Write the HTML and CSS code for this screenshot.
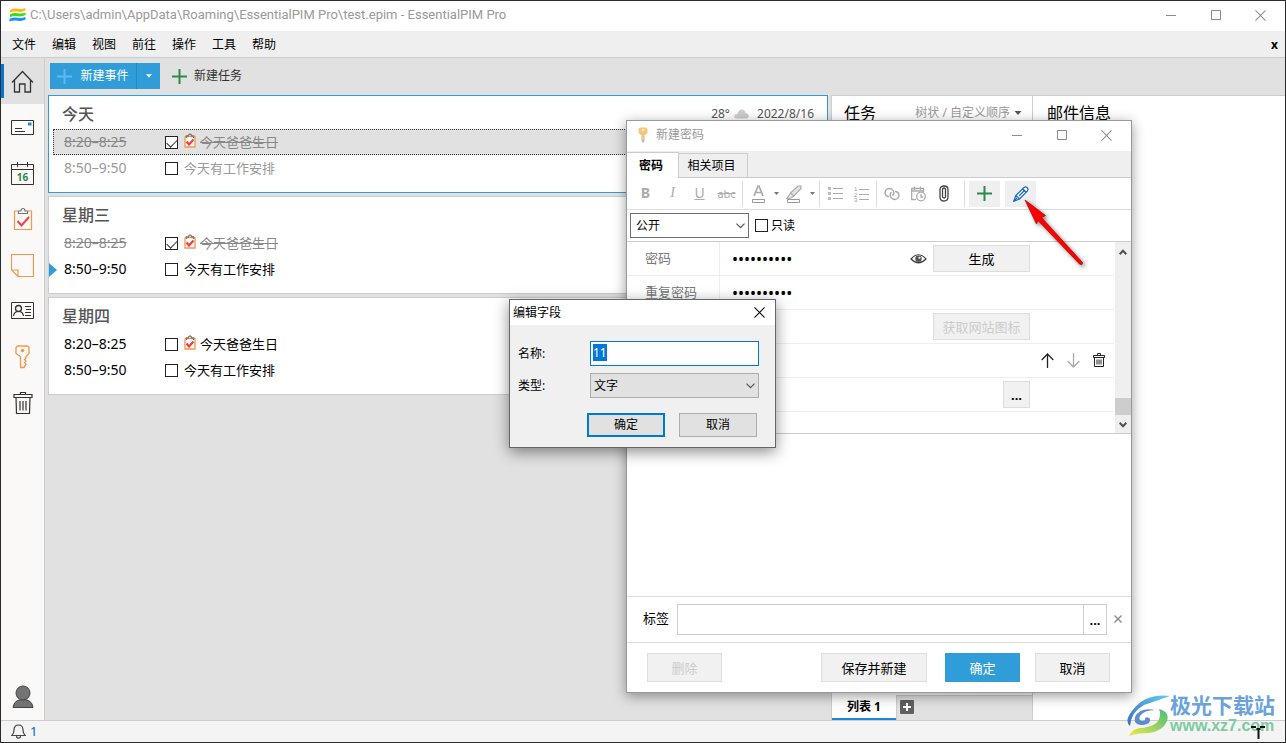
FILE: index.html
```html
<!DOCTYPE html>
<html lang="zh-CN">
<head>
<meta charset="utf-8">
<title>EssentialPIM Pro</title>
<link rel="stylesheet" href="styles.css">
</head>
<body>
<svg class="defs" aria-hidden="true">
  <symbol id="clip-check" viewBox="0 0 20 24">
    <path d="M5 4H1.500V22.500H18.500V4H15" fill="none" stroke="#f79646" stroke-width="1.200"/>
    <path d="M5.500 6.500V4H8Q8 1.500 10 1.500T12 4H14.500V6.500Z" fill="#fff" stroke="#777" stroke-width="1.200"/>
    <path d="M4.500 14L8.500 18.500L16 10" fill="none" stroke="#ee4048" stroke-width="2"/>
  </symbol>
  <symbol id="clip-small" viewBox="0 0 12 15">
    <path d="M1 3.500V14H11V3.500H1" fill="#fff" stroke="#f79646" stroke-width="1.300"/>
    <path d="M2.500 5V3H4.300Q4.500 1 6 1T7.700 3H9.500V5" fill="none" stroke="#777" stroke-width="1.300"/>
    <path d="M2.500 8.500L5 11.500L9.500 6.500" fill="none" stroke="#ee4048" stroke-width="2.200"/>
  </symbol>
  <symbol id="trash" viewBox="0 0 20 24">
    <path d="M1 3.500H19V6.500H1ZM7.500 3.500V1.500H12.500V3.500M3 6.500L3.500 22.500H16.500L17 6.500M7 10V19.500M10 10V19.500M13 10V19.500" fill="none" stroke="#333" stroke-width="1.200"/>
  </symbol>
  <symbol id="caret" viewBox="0 0 7 4"><path d="M0 0H7L3.500 4Z" fill="currentColor"/></symbol>
  <symbol id="chevron" viewBox="0 0 9 6"><path d="M.5 .7L4.500 4.700L8.500 .7" fill="none" stroke="#555" stroke-width="1.200"/></symbol>
  <symbol id="chevron-bold" viewBox="0 0 8 6"><path d="M.7 .8L4 4.200L7.300 .8" fill="none" stroke="#505050" stroke-width="2"/></symbol>
  <symbol id="plus" viewBox="0 0 15 15"><path d="M7.500 0V15M0 7.500H15" fill="none" stroke="currentColor" stroke-width="2"/></symbol>
  <symbol id="close" viewBox="0 0 12 12"><path d="M.5 .5L11.500 11.500M11.500 .5L.5 11.500" fill="none" stroke="currentColor" stroke-width="1.100"/></symbol>
  <symbol id="min" viewBox="0 0 12 12"><path d="M1 6.500H11" stroke="currentColor"/></symbol>
  <symbol id="max" viewBox="0 0 12 12"><path d="M1.500 1.500H10.500V10.500H1.500Z" fill="none" stroke="currentColor"/></symbol>
</svg>

<div class="app">
  <header class="titlebar">
    <svg class="logo" width="17" height="14" viewBox="0 0 17 14"><path d="M1 2Q5 0 9 .8T16.500 0V2.500Q13 4.500 9 3.700T1 4.500Z" fill="#ffb81c"/><path d="M1 6.300Q5 4.500 9 5.300T16.500 4.500V7Q13 9 9 8.200T1 9Z" fill="#3fdc1b"/><path d="M.5 10.800Q5 9 9 9.800T16.500 9V11.500Q13 13.500 9 12.700T.5 13.500Z" fill="#1296f5"/></svg>
    <span class="path">C:\Users\admin\AppData\Roaming\EssentialPIM Pro\test.epim - EssentialPIM Pro</span>
    <div class="winctl">
      <button aria-label="最小化"><svg width="12" height="12"><use href="#min"/></svg></button>
      <button aria-label="最大化"><svg width="12" height="12"><use href="#max"/></svg></button>
      <button aria-label="关闭"><svg width="11" height="11"><use href="#close"/></svg></button>
    </div>
  </header>

  <nav class="menubar">
    <button>文件</button><button>编辑</button><button>视图</button><button>前往</button><button>操作</button><button>工具</button><button>帮助</button>
    <button class="menubar-x">x</button>
  </nav>

  <div class="body">
    <aside class="sidebar">
      <button class="side active" aria-label="今天"><svg width="23" height="23" viewBox="0 0 23 23"><path d="M1 12.500L11.500 1.500L22 12.500M3.500 10V22H8.500V14H14V22H19.500V10" fill="none" stroke="#333" stroke-width="1.300"/></svg></button>
      <button class="side" aria-label="邮件"><svg width="23" height="15" viewBox="0 0 23 15"><path d="M.5 .5H22.500V14.500H.5Z" fill="#fff" stroke="#333"/><path d="M17 2.500H20.500V5.500H17Z" fill="#1b87d6"/><path d="M4 8.500H11M4 11.500H14" stroke="#333"/></svg></button>
      <button class="side" aria-label="日历"><svg width="23" height="23" viewBox="0 0 23 23"><path d="M.5 2.500H22.500V22.500H.5ZM.5 7.500H22.500M6.500 0V5M16.500 0V5" fill="none" stroke="#333"/><text x="11.500" y="19" class="cal-num">16</text></svg></button>
      <button class="side" aria-label="任务"><svg width="20" height="24"><use href="#clip-check"/></svg></button>
      <button class="side" aria-label="便笺"><svg width="23" height="23" viewBox="0 0 23 23"><path d="M.5 .5H22.500V22.500H7L.5 16ZM.5 16H7V22.500" fill="none" stroke="#f79646" stroke-width="1.200"/></svg></button>
      <button class="side" aria-label="联系人"><svg width="23" height="18" viewBox="0 0 23 18"><path d="M.5 .5H22.500V16.500H.5Z" fill="none" stroke="#333"/><circle cx="7.500" cy="6.500" r="3" fill="none" stroke="#333" stroke-width="1.300"/><path d="M2.500 14Q3 10 6.500 9.500M8.500 9.500Q12 10 12.500 14M14 4.500H20M15 7.500H20M14 10.500H20M14 13.500H20" fill="none" stroke="#333" stroke-width="1.200"/></svg></button>
      <button class="side" aria-label="密码"><svg width="15" height="24" viewBox="0 0 15 24"><path d="M2.500 1H12.500L14 2.500V8.500L11 11.500V13L9.500 14.500L11 16L9.500 17.500L11 19L9 22.500H5.500V11.500L1 8.500V2.500Z" fill="none" stroke="#f79646" stroke-width="1.300"/><circle cx="7.500" cy="5.500" r="1.800" fill="#f79646"/></svg></button>
      <button class="side" aria-label="回收站"><svg width="20" height="24"><use href="#trash"/></svg></button>
      <button class="side account" aria-label="帐户"><svg width="22" height="24" viewBox="0 0 22 24"><path d="M1 22.500Q2 14.500 11 14.500T21 22.500Z" fill="#737373" stroke="#444"/><circle cx="11" cy="8" r="7" fill="#737373" stroke="#444"/></svg></button>
    </aside>

    <div class="content">
      <div class="toolbar">
        <div class="split"><button class="new-event"><svg class="tint" width="15" height="15"><use href="#plus"/></svg>新建事件</button><button class="split-arrow" aria-label="更多"><svg width="6" height="4"><use href="#caret"/></svg></button></div>
        <button class="new-task"><svg class="green" width="15" height="15"><use href="#plus"/></svg>新建任务</button>
      </div>
      <div class="columns">
        <main class="days">
          <section class="day today">
            <header><h2>今天</h2><p>28°<svg width="15" height="10" viewBox="0 0 15 10"><path d="M3 9.500Q0 9.500 .3 7Q1 4.800 3.500 5Q4.500 .5 8 .5Q11 .5 11.500 4Q15 4.500 14.800 7.500Q14.500 9.500 12 9.500Z" fill="#ccc"/></svg>2022/8/16</p></header>
            <div class="row done selected"><time>8:20–8:25</time><label><input type="checkbox" checked><svg width="12" height="15"><use href="#clip-small"/></svg><span>今天爸爸生日</span></label></div>
            <div class="row past"><time>8:50–9:50</time><label><input type="checkbox"><span>今天有工作安排</span></label></div>
          </section>
          <section class="day">
            <header><h2>星期三</h2></header>
            <div class="row done"><time>8:20–8:25</time><label><input type="checkbox" checked><svg width="12" height="15"><use href="#clip-small"/></svg><span>今天爸爸生日</span></label></div>
            <div class="row next"><time>8:50–9:50</time><label><input type="checkbox"><span>今天有工作安排</span></label></div>
          </section>
          <section class="day">
            <header><h2>星期四</h2></header>
            <div class="row"><time>8:20–8:25</time><label><input type="checkbox"><svg width="12" height="15"><use href="#clip-small"/></svg><span>今天爸爸生日</span></label></div>
            <div class="row"><time>8:50–9:50</time><label><input type="checkbox"><span>今天有工作安排</span></label></div>
          </section>
        </main>
        <section class="tasks">
          <header><h2>任务</h2><button>树状 / 自定义顺序<svg width="8" height="4"><use href="#caret"/></svg></button></header>
          <footer><button class="list-tab">列表 1</button><div class="tab-rest"><button class="add-tab" aria-label="添加列表"><svg width="8" height="8" viewBox="0 0 8 8"><path d="M4 0V8M0 4H8" stroke="currentColor" stroke-width="2"/></svg></button></div></footer>
        </section>
        <section class="mail"><header><h2>邮件信息</h2></header></section>
      </div>
    </div>
  </div>

  <footer class="status">
    <svg width="15" height="15" viewBox="0 0 15 15"><path d="M.8 11.500Q3 9.500 3 6Q3 1 7.500 1T12 6Q12 9.500 14.200 11.500ZM5.500 12Q5.500 14.200 7.500 14.200T9.500 12" fill="none" stroke="#444" stroke-width="1.200"/></svg><span>1</span>
  </footer>
</div>

<section class="dialog">
  <header class="dlg-title">
    <svg width="10" height="16" viewBox="0 0 10 16"><path d="M3.500 6H6.500V14L5 16L3.500 14Z" fill="#b9b9b9"/><path d="M2 .5H8L9.500 2V6L7.500 8H6V13H4V8H2.500L.5 6V2Z" fill="#f2c879"/><circle cx="5" cy="3" r="1" fill="#fff"/></svg>
    <span>新建密码</span>
    <div class="winctl">
      <button aria-label="最小化"><svg width="12" height="12"><use href="#min"/></svg></button>
      <button aria-label="最大化"><svg width="12" height="12"><use href="#max"/></svg></button>
      <button aria-label="关闭"><svg width="11" height="11"><use href="#close"/></svg></button>
    </div>
  </header>
  <div class="tabs"><button class="tab on">密码</button><button class="tab">相关项目</button></div>
  <div class="format">
    <button class="b">B</button><button class="i">I</button><button class="u">U</button><button class="s">abc</button>
    <i class="sep"></i>
    <button aria-label="字体颜色"><svg width="13" height="19" viewBox="0 0 13 19"><path d="M2 12L6 2H7L11 12M3.500 8.500H9.500" fill="none" stroke="#aaa" stroke-width="1.700"/><path d="M.5 15.500H12.500V18.500H.5Z" fill="#fff" stroke="#999"/></svg></button><button class="mini" aria-label="选择颜色"><svg width="5" height="3"><use href="#caret"/></svg></button>
    <button aria-label="突出显示"><svg width="16" height="19" viewBox="0 0 16 19"><path d="M4.500 9L12 2H15V4.500L8 12ZM4.500 9L1 14.500L5 14L8 12" fill="#e4e4e4" stroke="#aaa" stroke-width="1.200"/><path d="M1.500 15.500H13.500V18.500H1.500Z" fill="#fff" stroke="#999"/></svg></button><button class="mini" aria-label="选择突出显示颜色"><svg width="5" height="3"><use href="#caret"/></svg></button>
    <i class="sep"></i>
    <button aria-label="项目符号"><svg width="15" height="14" viewBox="0 0 15 14"><path d="M0 0H3V3H0ZM0 5H3V8H0ZM0 10H3V13H0Z" fill="#bbb"/><path d="M5 1.500H15M5 6.500H15M5 11.500H15" stroke="#aaa"/></svg></button>
    <button aria-label="编号"><svg width="15" height="16" viewBox="0 0 15 16"><text class="num" x="0" y="5">1</text><text class="num" x="0" y="10.500">2</text><text class="num" x="0" y="16">3</text><path d="M5 3.500H15M5 8.500H15M5 13.500H15" stroke="#aaa"/></svg></button>
    <i class="sep"></i>
    <button aria-label="链接"><svg width="16" height="14" viewBox="0 0 16 14"><path d="M5 9.500H4Q1 8.500 1 5.500Q1.500 2 5 1.500Q8 1.500 9.500 4Q10.500 7 8.500 8.500M7.500 5Q5.500 6.500 6.500 9.500Q8 12.500 11 12.500Q14.500 12 15 8.500Q15 5.500 12 4.500H11" fill="none" stroke="#aaa" stroke-width="1.400"/></svg></button>
    <button aria-label="插入日期"><svg width="15" height="16" viewBox="0 0 15 16"><path d="M5 13.500H.7V2.500H12.500V6M.5 5H12.500M3.500 .5V4M9.500 .5V4" fill="none" stroke="#aaa" stroke-width="1.300"/><circle cx="10" cy="10.500" r="4.300" fill="#fff" stroke="#aaa" stroke-width="1.300"/><path d="M10 8V11H12" fill="none" stroke="#aaa" stroke-width="1.300"/></svg></button>
    <button aria-label="附件"><svg width="10" height="17" viewBox="0 0 10 17"><path d="M3.500 5V11.500Q3.500 13 5 13T6.500 11.500V4M6.500 4.500Q6.500 3 5 3T3.500 5M1 11V4.500Q1 1 5 1T9 4.500V12Q9 16 5 16T1 12V11" fill="none" stroke="#444" stroke-width="1.300"/></svg></button>
    <i class="sep far"></i>
    <button class="fill green" aria-label="添加字段"><svg width="15" height="15"><use href="#plus"/></svg></button>
    <button class="fill edit" aria-label="编辑字段"><svg width="16" height="16" viewBox="0 0 16 16"><path d="M.8 15.200L2.800 9.500L11 1.500Q12.500 .4 14 1.500Q15.600 3 14.500 4.800L6.500 13Z" fill="#fff" stroke="#1768b8" stroke-width="1.200"/><path d="M.8 15.200L4 12M2.800 9.500L6.500 13M6 10L12 4M9.500 3L13 6.300" fill="none" stroke="#1768b8" stroke-width="1.200"/></svg></button>
  </div>
  <div class="access">
    <div class="selectbox"><select aria-label="访问权限"><option>公开</option></select><svg width="9" height="6"><use href="#chevron"/></svg></div>
    <label><input type="checkbox">只读</label>
  </div>
  <div class="fields">
    <div class="rows">
      <div class="field"><label for="pw">密码</label><input id="pw" type="password" value="aaaaaaaaaa"><svg width="17" height="12" viewBox="0 0 17 12"><path d="M1 6Q8.500-2.500 16 6Q8.500 13.500 1 6Z" fill="#fff" stroke="#444" stroke-width="1.200"/><circle cx="8.500" cy="5.700" r="3.200" fill="#555"/><circle cx="9.500" cy="4.700" r="1" fill="#fff"/></svg><button class="btn">生成</button></div>
      <div class="field"><label for="pw2">重复密码</label><input id="pw2" type="password" value="aaaaaaaaaa"></div>
      <div class="field"><label></label><button class="btn" disabled>获取网站图标</button></div>
      <div class="field order"><label></label><button aria-label="上移"><svg width="13" height="15" viewBox="0 0 13 15"><path d="M6.500 15V1M.7 7L6.500 1L12.300 7" fill="none" stroke="#222" stroke-width="1.300"/></svg></button><button aria-label="下移"><svg width="13" height="15" viewBox="0 0 13 15"><path d="M6.500 0V14M.7 8L6.500 14L12.300 8" fill="none" stroke="#aaa" stroke-width="1.300"/></svg></button><button aria-label="删除字段"><svg width="12" height="15" viewBox="0 0 12 15"><path d="M.5 2.500H11.500V4.500H.5ZM4.500 2.500V.5H7.500V2.500M1.500 4.500V13.500H10.500V4.500M4 6.500V11.500M6 6.500V11.500M8 6.500V11.500" fill="none" stroke="#222"/></svg></button></div>
      <div class="field"><label></label><button class="btn dots">...</button></div>
      <div class="field last"><label></label></div>
    </div>
    <div class="scroll"><svg class="up" width="8" height="6"><use href="#chevron-bold"/></svg><i></i><svg width="8" height="6"><use href="#chevron-bold"/></svg></div>
  </div>
  <div class="notes"></div>
  <div class="tags"><label for="tags">标签</label><input id="tags" type="text"><button class="more">...</button><button class="clear" aria-label="清除"><svg width="8" height="8" viewBox="0 0 8 8"><path d="M.5 .5L7.500 7.500M7.500 .5L.5 7.500" stroke="currentColor" stroke-width="1.400"/></svg></button></div>
  <div class="actions"><button class="btn" disabled>删除</button><button class="btn save">保存并新建</button><button class="btn primary">确定</button><button class="btn">取消</button></div>
</section>

<form class="popup">
  <header><span>编辑字段</span><button type="button" aria-label="关闭"><svg width="11" height="11"><use href="#close"/></svg></button></header>
  <div class="line"><label for="name">名称:</label><input id="name" type="text" value="11"></div>
  <div class="line"><label for="type">类型:</label><div class="selectbox"><select id="type"><option>文字</option></select><svg width="9" height="6"><use href="#chevron"/></svg></div></div>
  <div class="popup-actions"><button type="button" class="ok">确定</button><button type="button">取消</button></div>
</form>

<svg class="arrow" width="72" height="80" viewBox="0 0 72 80"><path d="M4 4L24.500 19.500L20.500 21.500L61.500 66.500Q62 69.500 58.500 68L17 24.500L15.500 28Z" fill="#f00" stroke="#a00" stroke-width=".7"/></svg>

<div class="watermark">
  <svg width="44" height="42" viewBox="0 0 44 42"><defs><linearGradient id="wa" x1="0" y1="1" x2="1" y2="0"><stop offset="0" stop-color="#3a70bd"/><stop offset="1" stop-color="#62ccf0"/></linearGradient><linearGradient id="wb" x1="0" y1="1" x2="1" y2="0"><stop offset="0" stop-color="#f0e848"/><stop offset="1" stop-color="#45bd7c"/></linearGradient></defs><path d="M44 1Q19-2 6 16Q-2 26 4 31Q5 17 18 10Q30 6 44 1Z" fill="url(#wa)"/><path d="M33 14Q44 17 41 26Q37 36 23 38Q11 38 3 41Q6 34 14 33Q30 32 33 24Q35 19 33 14Z" fill="url(#wb)"/><path d="M29 15Q14 12 9 22Q7 30 17 30Q25 29 24 24Q22 21 19 23Q20 26 16 26Q12 25 14 21Q18 15 29 15Z" fill="#5b8dcf"/></svg>
  <div><strong>极光下载站</strong><span>www.xz7.com</span></div>
</div>
<svg class="cursor" width="14" height="13" viewBox="0 0 14 13"><path d="M0 1H5M9 1H14M5.500 3H9.500M7.500 3V13" fill="none" stroke="#111" stroke-width="2"/></svg>
<script src="main.js"></script>
</body>
</html>
```
FILE: styles.css
```css
* { box-sizing: border-box; }
html, body { height: 100%; }
body {
  margin: 0;
  padding: 1px;
  background: #2b2b2b;
  color: #000;
  font: 12px/16px "Noto Sans", "Noto Sans CJK SC", sans-serif;
  position: relative;
  overflow: hidden;
}
button, input, select { font: inherit; color: inherit; margin: 0; }
button { border: 0; padding: 0; background: none; display: flex; align-items: center; justify-content: center; white-space: nowrap; }
h2, p { margin: 0; font-weight: 400; }
svg { display: block; flex: none; }
.defs { display: none; }
input[type="checkbox"] {
  appearance: none;
  width: 13px;
  height: 13px;
  border: 1px solid #222;
  background: #fff;
  flex: none;
}
input[type="checkbox"]:checked::after {
  content: "";
  display: block;
  width: 9px;
  height: 5px;
  margin: 2px 0 0 1px;
  border: solid #333;
  border-width: 0 0 1px 1px;
  transform: rotate(-45deg);
}

.app { height: 100%; display: flex; flex-direction: column; background: #e1e1e1; }
.titlebar { height: 30px; display: flex; align-items: center; background: #fff; color: #999; padding: 0 2px 2px 8px; }
.path { margin-left: 4px; flex: 1; white-space: nowrap; font-family: Roboto, sans-serif; font-size: 13px; }
.winctl { display: flex; margin-left: auto; color: #8c8c8c; }
.winctl button { width: 45px; height: 28px; }
.menubar { height: 27px; display: flex; align-items: center; gap: 16px; padding: 2px 7px 0 11px; background: #efefef; border-bottom: 1px solid #ccc; }
.menubar-x { margin-left: auto; font-weight: 700; }

.body { flex: 1; display: flex; min-height: 0; }
.sidebar { width: 44px; display: flex; flex-direction: column; background: #faf9f8; border-right: 1px solid #ccc; }
.side { height: 46px; }
.side.active { background: #e1e1e1; position: relative; }
.side.active::before { content: ""; position: absolute; left: 0; top: 6px; width: 3px; height: 34px; background: #0078d7; }
.account { margin-top: auto; }
.cal-num { font: 700 10px "Noto Sans", sans-serif; fill: #2b8a4b; text-anchor: middle; }

.content { flex: 1; display: flex; flex-direction: column; min-width: 0; }
.toolbar { height: 37px; display: flex; align-items: center; gap: 12px; padding: 0 0 1px 5px; }
.split { display: flex; height: 26px; background: #319dd8; color: #fff; }
.new-event { width: 87px; gap: 8px; border-right: 1px solid #2488c2; }
.tint { color: #5fb8f5; }
.split-arrow { width: 23px; }
.new-task { gap: 7px; color: #333; }
.green { color: #2b8a4b; }

.columns { flex: 1; display: flex; min-height: 0; }
.days { flex: 1; padding: 0 3px; display: flex; flex-direction: column; gap: 3px; }
.day { background: #fff; border: 1px solid #ccc; padding: 0 4px 11px; }
.today { border-color: #319dd8; }
.day header { height: 33px; display: flex; align-items: center; justify-content: space-between; padding: 3px 9px 0; color: #555; }
.day h2 { font-size: 16px; line-height: 20px; font-weight: 500; }
.day p { display: flex; align-items: center; gap: 4px; }
.day p svg { margin-right: 4px; }
.row { height: 26px; display: flex; align-items: center; padding: 0 10px; position: relative; font-size: 13px; border: 1px solid transparent; }
.row time { width: 101px; font-size: 14px; }
.row label { display: flex; align-items: center; gap: 5px; }
.row label svg { margin: 0 -1px 3px 0; }
.row input { margin-right: 1px; }
.done { color: #888; text-decoration: line-through; }
.past { color: #999; }
.selected { background: #e1e1e1; border: 1px dotted #333; }
.next::before { content: ""; position: absolute; left: -5px; top: 6px; border: solid transparent; border-width: 7px 0 7px 8px; border-left-color: #319dd8; }

.tasks, .mail { background: #fff; border-top: 1px solid #ccc; }
.tasks { width: 202px; border-left: 1px solid #ccc; border-right: 1px solid #ccc; display: flex; flex-direction: column; }
.mail { width: 252px; }
.tasks header, .mail header { display: flex; align-items: center; justify-content: space-between; padding: 7px 10px 0 12px; }
.mail header { padding-left: 14px; }
.tasks h2, .mail h2 { font-size: 16px; line-height: 20px; }
.tasks header button { color: #999; gap: 4px; }
.tasks header svg { color: #555; }
.tasks footer { margin-top: auto; height: 25px; display: flex; }
.list-tab { width: 64px; border-bottom: 2px solid #1b87d6; font-weight: 700; }
.tab-rest { flex: 1; background: #e1e1e1; border-top: 1px solid #ccc; border-left: 1px solid #ccc; padding: 4px 3px; }
.add-tab { width: 14px; height: 14px; background: #606060; color: #fff; border-radius: 1px; }
.status { height: 22px; display: flex; align-items: center; gap: 4px; padding: 0 0 1px 10px; border-top: 1px solid #ccc; background: #f4f4f4; color: #0066cc; font-size: 13px; }

.dialog {
  position: absolute;
  left: 626px;
  top: 120px;
  width: 506px;
  background: #fff;
  border: 1px solid #999;
  box-shadow: 0 3px 12px rgba(0, 0, 0, .4);
}
.dlg-title { height: 30px; display: flex; align-items: center; gap: 8px; padding: 0 2px 2px 11px; color: #999; }
.tabs { height: 27px; display: flex; align-items: flex-end; background: #efefef; border-bottom: 1px solid #ccc; }
.tab { width: 69px; height: 24px; border: 1px solid #ccc; border-width: 1px 1px 0 0; padding-right: 3px; }
.tab.on { width: 52px; height: 26px; margin-bottom: -1px; background: #fff; border-left: 0; font-weight: 700; }
.format { height: 32px; display: flex; align-items: center; padding-left: 5px; border-bottom: 1px solid #ddd; color: #aaa; }
.format button { width: 26px; height: 26px; }
.format .b, .format .i, .format .u, .format .s { width: 27px; font-size: 14px; padding-bottom: 2px; }
.format .b { font-weight: 700; }
.format .i { font-family: "Liberation Serif", serif; font-style: italic; }
.format .u { text-decoration: underline; }
.format .s { font-size: 11px; padding: 0; text-decoration: line-through; }
.format .mini { width: 10px; color: #777; }
.format .fill { width: 31px; background: #efefef; margin-left: 5px; }
.format .green { margin-left: 4px; }
.sep { width: 1px; height: 26px; margin: 0 2px; background: #ddd; }
.sep.far { margin-left: 7px; margin-right: 0; }
.num { font: 6px "Liberation Sans", sans-serif; fill: #999; }
.access { height: 32px; display: flex; align-items: center; gap: 6px; padding-left: 3px; border-bottom: 1px solid #ccc; }
.access label { display: flex; align-items: center; gap: 3px; }
.selectbox { position: relative; display: flex; width: 119px; height: 25px; }
.selectbox select { appearance: none; width: 100%; padding: 0 5px; border: 1px solid #707070; border-radius: 0; background: #fff; }
.selectbox svg { position: absolute; right: 4px; top: 10px; pointer-events: none; }

.fields { display: flex; border-bottom: 1px solid #ccc; font-size: 13px; }
.rows { flex: 1; min-width: 0; padding-right: 1px; }
.field { height: 34px; display: flex; align-items: center; justify-content: flex-end; padding-right: 84px; border-bottom: 1px solid #eee; }
.field > label { flex: none; width: 93px; align-self: stretch; display: flex; align-items: center; margin-right: auto; padding: 0 0 2px 18px; border-right: 1px solid #eee; color: #777; }
.field input { flex: 1; width: 0; min-width: 0; border: 0; padding: 0 12px; font: 16px/20px "Noto Sans", sans-serif; }
.field svg { margin-right: 6px; }
.field .btn { width: 97px; height: 27px; }
.field .btn.dots { width: 27px; }
.dots, .more { font-weight: 700; }
.order { padding-right: 9px; gap: 13px; }
.order svg { margin: 0; }
.field.last { height: 21px; border: 0; }
.btn { height: 29px; background: #f1f1f1; border: 1px solid #ddd; font-size: 13px; }
.btn:disabled { color: #ccc; }
.scroll { width: 16px; background: #efefef; display: flex; flex-direction: column; align-items: center; padding: 7px 0 5px; }
.scroll i { width: 100%; height: 17px; margin: auto 0 7px; background: #cdcdcd; }
.up { transform: rotate(180deg); }
.notes { height: 162px; }
.tags { height: 47px; display: flex; align-items: center; padding: 0 9px 0 16px; border: solid #ddd; border-width: 1px 0; font-size: 13px; }
.tags label { padding-bottom: 4px; }
.tags input { flex: 1; height: 31px; margin-left: 8px; border: 1px solid #ccc; }
.more { width: 23px; height: 31px; border: 1px solid #ccc; border-left: 0; }
.clear { margin-left: 7px; padding-bottom: 2px; color: #888; }
.actions { display: flex; padding: 10px 21px 10px 20px; gap: 15px; }
.actions .btn { width: 75px; }
.actions .save { width: 106px; margin-left: auto; margin-right: 3px; }
.actions .primary { background: #319dd8; border-color: #319dd8; color: #fff; }

.popup {
  position: absolute;
  left: 509px;
  top: 299px;
  width: 267px;
  background: #f0f0f0;
  border: 1px solid #666;
  box-shadow: 0 4px 14px rgba(0, 0, 0, .45);
}
.popup header { height: 25px; display: flex; align-items: center; justify-content: space-between; padding: 0 10px 0 3px; margin-bottom: 16px; background: #fff; }
.line { display: flex; align-items: center; justify-content: space-between; padding: 0 16px 0 8px; margin-bottom: 7px; }
.line input { width: 169px; height: 25px; padding: 0 2px 2px 2px; border: 1px solid #0078d7; outline: 0; background: #fff; }
.line input::selection { background: #0078d7; color: #fff; }
.line .selectbox { width: 169px; }
.line select { padding: 0 3px; background: #e1e1e1; border-color: #adadad; }
.popup-actions { display: flex; justify-content: flex-end; gap: 14px; padding: 8px 18px 10px; }
.popup-actions button { width: 78px; height: 24px; background: #e1e1e1; border: 1px solid #adadad; }
.popup-actions .ok { border: 2px solid #0078d7; }

.arrow { position: absolute; left: 1021px; top: 196px; filter: drop-shadow(2px 2px 2px rgba(0, 0, 0, .5)); pointer-events: none; }
.watermark { position: absolute; right: 11px; bottom: 6px; display: flex; align-items: center; pointer-events: none; }
.watermark div { display: flex; flex-direction: column; }
.watermark strong { font-size: 21px; line-height: 20px; color: #6aa3dc; }
.watermark span { font: 700 16px/22px "Liberation Sans", sans-serif; color: #7ccba0; }
.cursor { position: absolute; right: 21px; bottom: 4px; }
```
FILE: main.js
```js
document.getElementById('name').select();
```
